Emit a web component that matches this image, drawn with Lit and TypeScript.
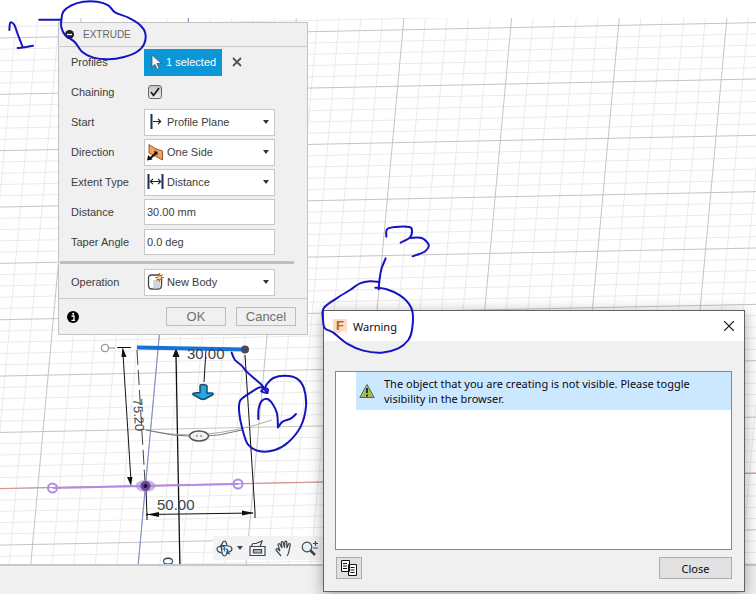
import { LitElement, html, css, svg } from "lit";
import { customElement } from "lit/decorators.js";

type Point = [number, number];

/** Turns a list of pen positions into a smooth stroke. */
function stroke(points: Point[]): string {
  const at = (i: number) => points[Math.max(0, Math.min(points.length - 1, i))];
  let d = `M${points[0].join(" ")}`;
  for (let i = 0; i < points.length - 1; i++) {
    const [a, b, c, e] = [at(i - 1), at(i), at(i + 1), at(i + 2)];
    d += `C${b[0] + (c[0] - a[0]) / 6} ${b[1] + (c[1] - a[1]) / 6} ${c[0] - (e[0] - b[0]) / 6} ${c[1] - (e[1] - b[1]) / 6} ${c[0]} ${c[1]}`;
  }
  return d;
}

/** The 3D canvas: ground grid, axes, sketch geometry and dimensions. */
@customElement("sketch-canvas")
export class SketchCanvas extends LitElement {
  static styles = css`
    :host { display: block; overflow: hidden; background: #fff; }
    .scene { display: block; width: 100%; height: 100%; }
    .minor { stroke: #ebebeb; }
    .major { stroke: #c4c4c4; }
    .dim { font: 15px "Liberation Sans", Arial, sans-serif; fill: #444; }
    .dim.small { font-size: 13px; }
  `;

  private grid(major: boolean) {
    const lines = [];
    for (let i = -5; i < 130; i++) {
      if ((i % 5 === 0) !== major) continue;
      const x = 81 + i * 21.53;
      const y = 38 + i * 11.27;
      lines.push(svg`<path d="M${x} 18l-184 2000M0 ${y}l3000 -61"/>`);
    }
    return lines;
  }

  render() {
    return html`
      <svg class="scene" role="img" aria-label="Sketch canvas">
        <defs><clipPath id="ground"><rect y="18" width="3000" height="2000" /></clipPath></defs>
        <g clip-path="url(#ground)" fill="none">
          <g class="minor">${this.grid(false)}</g>
          <g class="major">${this.grid(true)}</g>
          <path d="M0 488.5L3000 427" stroke="#d98c8c" />
          <path d="M188.5 18L138 566" stroke="#7d8ccb" />
        </g>
        <g fill="none" stroke="#111">
          <path d="M123 354L131 481" />
          <path d="M176 355L180 570" stroke-width="1.3" />
          <path d="M206 350L204 382" />
          <path d="M245 355L255 512M253 513L147 514.500M146 488L147 516M255 512v6M147 513v7" />
          <path d="M137 350L145 482" stroke="#444" stroke-dasharray="15 5" />
          <path d="M117 347.5h14" />
          <path d="M109 348h6" stroke="#888" />
          <circle cx="105" cy="348" r="3.6" fill="#fff" stroke="#999" stroke-width="1.4" />
        </g>
        <g fill="#111">
          <path d="M122.500 347l4 10h-5zM131 486l-4-9h5.500zM176 348l3.500 9h-7zM147 514.500l12-2.500v5zM254 513l-12-2.500v5z" />
        </g>
        <path d="M142 429Q200 444 272 420" fill="none" stroke="#aaa" />
        <path d="M146 430Q198 443 242 430" fill="none" stroke="#777" />
        <ellipse cx="199" cy="436" rx="9.500" ry="5" fill="#f2f2f2" stroke="#555" stroke-width="1.6" />
        <path d="M195.500 436l2-1.300v2.600zM202.500 436l-2-1.300v2.600z" fill="#777" />
        <path d="M137 347.500L245 349.500" stroke="#1672d8" stroke-width="4" />
        <circle cx="245" cy="349.500" r="4" fill="#444c55" />
        <path d="M200 386q0-1.500 3-1.500t4 1.500v7h4.500q2 0 1.500 1.500l-8 4.500q-2 .8-4 0l-8-4.500q-.5-1.500 1.500-1.500l5.500-.5z" fill="#22a7e0" stroke="#174b66" stroke-width="1.500" stroke-linejoin="round" />
        <text class="dim" x="187" y="359">30.00</text>
        <text class="dim" x="157" y="510">50.00</text>
        <text class="dim small" transform="translate(133 399) rotate(86)">75.20</text>
        <text class="dim" transform="translate(163 557) rotate(90)">0</text>
        <path d="M53 488L238 484" stroke="#b18be8" stroke-width="2" />
        <ellipse cx="145.500" cy="486" rx="10" ry="6" fill="#a98fd0" opacity=".65" />
        <circle cx="145.500" cy="486" r="5" fill="#6a469c" />
        <circle cx="145.500" cy="486" r="2" fill="#1d0b33" />
        <g fill="none" stroke="#b18be8" stroke-width="2"><circle cx="52.500" cy="488" r="4.500" /><circle cx="238" cy="484" r="4.500" /></g>
      </svg>
    `;
  }
}

const ICONS = {
  plane: svg`<path d="M4.500 1v15" stroke="#1d2c55" stroke-width="2"/><path d="M6 8.500h8M11 5.800l2.700 2.700L11 11.200" fill="none" stroke="#222" stroke-width="1.200"/>`,
  side: svg`<path d="M2 1.500L8 5.500 15.500 8v9L9 13.500 2 10z" fill="#f5a064" stroke="#9a5a2a"/><path d="M8 5.500v8" stroke="#c87636"/><path d="M3 15.500L9 10" stroke="#111" stroke-width="2"/><path d="M0 17.500l1.200-5.500 4.300 4.500zM6.500 8.500h4v4z" fill="#111"/>`,
  distance: svg`<path d="M1.500 1v15M15.500 1v15" stroke="#1d2c55" stroke-width="2"/><path d="M3 8.500h11M6 5.800l-2.700 2.700L6 11.200M11 5.800l2.700 2.700L11 11.200" fill="none" stroke="#222" stroke-width="1.200"/>`,
  body: svg`<path d="M1.500 5q0-3 3-3h8l2 3v7q0 4-3 4h-7q-3 0-3-4z" fill="#fff" stroke="#444" stroke-width="1.300"/><path d="M6 7h7v7q-1 1.500-3 1.500H6z" fill="#cfd6e6"/><path d="M12.500 0v9M8 4.500h9M9.500 1.500l6 6M15.500 1.500l-6 6" stroke="#c4651b" stroke-width="1.200"/><circle cx="12.500" cy="4.500" r="1.700" fill="#ffd774"/>`,
};

/** Command panel with the parameters of the extrusion. */
@customElement("extrude-panel")
export class ExtrudePanel extends LitElement {
  static styles = css`
    :host {
      display: block; box-sizing: border-box; border: 1px solid #c3c3c3; background: #f0f0f0;
      font: 11px/14px "Liberation Sans", Arial, sans-serif; color: #3c3c3c;
    }
    * { box-sizing: border-box; }
    .head { display: flex; align-items: center; gap: 9px; height: 24px; padding-left: 6px; border-bottom: 1px solid #cacaca; }
    .title { margin: 0; font-size: 10px; font-weight: 400; color: #666; }
    .plain { display: grid; place-items: center; padding: 0; border: 0; background: none; }
    .row { display: grid; grid-template-columns: 73px 131px; align-items: center; height: 30px; padding-left: 12px; }
    .line { display: flex; align-items: center; gap: 10px; }
    .pick {
      display: flex; align-items: center; gap: 4px; flex: none; width: 78px; height: 27px; padding: 0 0 0 7px;
      border: 0; background: #0a96d7; color: #fff; font: inherit;
    }
    .tick { display: grid; width: 14px; height: 14px; margin-left: 4px; }
    .tick > * { grid-area: 1 / 1; width: 14px; height: 14px; margin: 0; }
    .box { appearance: none; border: 1px solid #666; border-radius: 3px; background: linear-gradient(#c4c4c4, #ececec); }
    .tick svg, .combo svg { pointer-events: none; }
    .combo { display: grid; grid-template-columns: 27px 1fr 18px; align-items: center; }
    .combo > * { grid-row: 1; }
    .glyph { grid-column: 1; z-index: 1; margin-left: 3px; }
    .caret { grid-column: 3; z-index: 1; justify-self: center; }
    .field { width: 100%; height: 26px; padding: 0 2px; border: 1px solid #c8c8c8; border-radius: 0; background: #fff; color: #3c3c3c; font: inherit; }
    .combo .field { grid-column: 1 / 4; appearance: none; height: 27px; padding-left: 22px; }
    .rule { height: 3px; margin: 4px 13px 3px 1px; border: 0; background: #bebebe; }
    .foot { display: flex; align-items: center; gap: 10px; height: 36px; margin-top: 1px; padding: 0 11px 0 8px; border-top: 1px solid #cacaca; }
    .info { margin-right: auto; }
    .action { width: 60px; height: 19px; padding: 0; border: 1px solid #bdbdbd; background: #f0f0f0; color: #707070; font: 13px/16px "Liberation Sans", Arial, sans-serif; }
  `;

  private combo(id: string, label: string, value: string, icon: unknown) {
    return html`
      <div class="row">
        <label for=${id}>${label}</label>
        <div class="combo">
          <select class="field" id=${id}><option>${value}</option></select>
          <svg class="glyph" width="18" height="18">${icon}</svg>
          <svg class="caret" width="6" height="4"><path d="M0 0h6L3 4z" fill="#333" /></svg>
        </div>
      </div>
    `;
  }

  private input(id: string, label: string, value: string) {
    return html`
      <div class="row">
        <label for=${id}>${label}</label>
        <input class="field" id=${id} .value=${value} />
      </div>
    `;
  }

  render() {
    return html`
      <header class="head">
        <button class="plain" aria-label="Collapse">
          <svg width="9" height="9"><circle cx="4.500" cy="4.500" r="4.500" fill="#222" /><path d="M2 4.500h5" stroke="#fff" stroke-width="1.300" /></svg>
        </button>
        <h2 class="title">EXTRUDE</h2>
      </header>
      <div class="row">
        <label for="profiles">Profiles</label>
        <div class="line">
          <button class="pick" id="profiles">
            <svg width="11" height="15"><path d="M1 0v12l3-2.500 2.200 5 2-1L6 8.500h4.500z" fill="#f4f4f4" stroke="#445" stroke-width=".7" /></svg>
            <span>1 selected</span>
          </button>
          <button class="plain" aria-label="Clear selection">
            <svg width="10" height="10"><path d="M1 1l8 8M9 1l-8 8" stroke="#555" stroke-width="1.800" /></svg>
          </button>
        </div>
      </div>
      <div class="row">
        <label for="chaining">Chaining</label>
        <span class="tick">
          <input class="box" id="chaining" type="checkbox" checked />
          <svg><path d="M3 7l2.500 3.500L11 3" fill="none" stroke="#111" stroke-width="1.600" /></svg>
        </span>
      </div>
      ${this.combo("start", "Start", "Profile Plane", ICONS.plane)}
      ${this.combo("direction", "Direction", "One Side", ICONS.side)}
      ${this.combo("extent", "Extent Type", "Distance", ICONS.distance)}
      ${this.input("distance", "Distance", "30.00 mm")}
      ${this.input("taper", "Taper Angle", "0.0 deg")}
      <hr class="rule" />
      ${this.combo("operation", "Operation", "New Body", ICONS.body)}
      <footer class="foot">
        <button class="plain info" aria-label="Information">
          <svg width="12" height="12"><circle cx="6" cy="6" r="6" fill="#000" /><path d="M4.500 5h2.500v4M4.500 9.300h3.500" fill="none" stroke="#fff" stroke-width="1.300" /><circle cx="6.200" cy="2.800" r="1" fill="#fff" /></svg>
        </button>
        <button class="action">OK</button>
        <button class="action">Cancel</button>
      </footer>
    `;
  }
}

/** Message window listing the warnings of the current command. */
@customElement("warning-dialog")
export class WarningDialog extends LitElement {
  static styles = css`
    :host {
      display: flex; flex-direction: column; box-sizing: border-box; border: 1px solid #636363; background: #f0f0f0;
      box-shadow: 0 3px 14px rgba(0, 0, 0, 0.35); font: 11px/15px "Noto Sans", "Open Sans", sans-serif; color: #0a0a14;
    }
    * { box-sizing: border-box; }
    .bar { display: flex; align-items: center; gap: 5px; height: 30px; padding: 0 10px 0 8px; background: #fff; }
    .title { flex: 1; margin: 0; font-size: 11px; font-weight: 400; }
    .mark { font: bold 13px "Liberation Sans", Arial, sans-serif; fill: #b5642a; }
    .shut { display: grid; padding: 0; border: 0; background: none; }
    .list { height: 179px; margin: 30px 12px 0 11px; padding: 0 0 0 20px; border: 1px solid #828790; background: #fff; list-style: none; }
    .item { display: flex; align-items: center; gap: 9px; height: 38px; padding-left: 3px; background: #cce8ff; }
    .item svg { flex: none; }
    .foot { display: flex; justify-content: space-between; align-items: flex-start; padding: 7px 12px 12px; }
    .button { display: grid; place-items: center; height: 22px; padding: 0; border: 1px solid #adadad; background: #e1e1e1; color: inherit; font: inherit; }
    .copy { width: 26px; }
    .close { width: 73px; }
  `;

  render() {
    return html`
      <header class="bar">
        <svg width="16" height="16" aria-hidden="true">
          <rect x="1" y="1" width="14" height="14" fill="#fbdcc0" />
          <text class="mark" x="4" y="12">F</text>
          <path d="M9 14h5" stroke="#fff" stroke-width="1.500" />
        </svg>
        <h2 class="title">Warning</h2>
        <button class="shut" aria-label="Close window">
          <svg width="10" height="10"><path d="M0 0l10 10M10 0L0 10" stroke="#111" stroke-width="1.200" /></svg>
        </button>
      </header>
      <ul class="list">
        <li class="item">
          <svg width="16" height="16"><path d="M8 1.500L15.200 14.500H.8z" fill="#c3c545" stroke="#41676a" stroke-linejoin="round" /><path d="M8 3.500L13.700 14H2.300z" fill="#8fae55" opacity=".5" /><path d="M8 5v5M8 11.500v2" stroke="#17383e" stroke-width="2" /></svg>
          <span>The object that you are creating is not visible. Please toggle<br />visibility in the browser.</span>
        </li>
      </ul>
      <footer class="foot">
        <button class="button copy" aria-label="Copy">
          <svg width="16" height="16"><g fill="#fff" stroke="#111"><path d="M.5.500h8v11h-8zM7.500 4.500h8v11h-8z" /><path d="M2 3.500h4M2 6h4M2 8.500h4M9.500 7.500h4M9.500 10h4M9.500 12.500h4" /></g></svg>
        </button>
        <button class="button close">Close</button>
      </footer>
    `;
  }
}

/** View navigation controls along the lower edge of the canvas. */
@customElement("nav-tools")
export class NavTools extends LitElement {
  static styles = css`
    :host { display: flex; align-items: center; gap: 9px; box-sizing: border-box; height: 24px; padding: 0 3px; background: #f3f3f3; }
    .tool { display: flex; align-items: center; gap: 4px; padding: 0; border: 0; background: none; }
    .menu { width: 24px; }
    .menu svg { flex: none; }
    svg { fill: none; stroke: #3d4750; stroke-width: 1.200; }
    .solid { fill: #3d4750; stroke: none; }
  `;

  render() {
    return html`
      <button class="tool menu" aria-label="Orbit">
        <svg width="17" height="17"><path d="M6 13q-5-1-5-4t7-3.500q8 0 8 3.500 0 2-4 3.500M12 10l-1 3 3 1" /><path d="M6 4q1-3 2.500-3T11 5M11.500 9q-.5 7-3 7T5.500 9V6M4 7.500l1.500-3L8 7" /><path d="M8.500 6.500v5M6 9h5" stroke="#2678b8" /></svg>
        <svg width="6" height="4"><path class="solid" d="M0 0h6L3 4z" /></svg>
      </button>
      <button class="tool" aria-label="Look at">
        <svg width="17" height="17"><path d="M1 6.500h15v9H1zM2 6.500L4 3.500h3L13 1l-1 3-1 2.500" /><path d="M4.500 9.500h8v3.500h-8z" fill="#aeb5ba" /></svg>
      </button>
      <button class="tool" aria-label="Pan">
        <svg width="17" height="17"><path d="M6 16L1 10q0-2 2-1l2 2L3 5q0-2 1.800-1L7 8 6.300 2.500q.7-2 2 0L9.500 7.500l.3-5.500q1-1.800 2 0v6l1.700-4q1.500-1.200 1.800.5L14 11q-.5 3-2 5" /></svg>
      </button>
      <button class="tool" aria-label="Zoom">
        <svg width="18" height="17"><circle cx="6" cy="7" r="4.800" fill="#e6f1f7" /><path d="M9.500 10.500L14 15" stroke-width="2.500" /><path d="M12 3.500h5M14.500 1v5M12 8h5" stroke-width="1.100" /></svg>
      </button>
    `;
  }
}

/** Freehand pen marks laid over the workspace. */
const MARKS: { origin: Point; strokes: Point[][] }[] = [
  {
    origin: [0, 0],
    strokes: [
      [[28, 90], [31, 68], [43, 75], [54, 105], [68, 141]],
      [[53, 144], [75, 142], [99, 137]],
      [[118, 59], [183, 59]],
      [[184, 60], [190, 35], [214, 16], [250, 5], [292, 5], [325, 16], [345, 37], [385, 53], [420, 75], [436, 100], [432, 133], [410, 156], [372, 171], [325, 178], [280, 173], [246, 155], [224, 126], [195, 105], [184, 82], [184, 60]],
    ],
  },
  {
    origin: [40, 330],
    strokes: [
      [[575, 68], [585, 90], [605, 107], [620, 125], [645, 147], [665, 165], [682, 189]],
      [[682, 189], [684, 178], [672, 177], [664, 184], [682, 189]],
      [[674, 178], [680, 163], [700, 144], [735, 137], [770, 145], [792, 175], [798, 230], [782, 290], [745, 337], [705, 360], [660, 364], [625, 345], [608, 300], [598, 250], [600, 213], [628, 190], [660, 172], [676, 178]],
      [[655, 267], [656, 235], [665, 213], [682, 207], [698, 222], [711, 250], [714, 292]],
      [[714, 292], [728, 275], [752, 266], [768, 252]],
    ],
  },
  {
    origin: [320, 220],
    strokes: [
      [[199, 50], [201, 28], [225, 21], [268, 21], [276, 32], [270, 52], [242, 68]],
      [[270, 54], [305, 54], [326, 74], [318, 92], [298, 102], [278, 109]],
      [[197, 115], [185, 145], [179, 175], [176, 208]],
      [[166, 203], [200, 208], [240, 226], [266, 250], [278, 278], [276, 330], [265, 360], [235, 385], [185, 398], [130, 392], [80, 370], [40, 338], [15, 325], [9, 300], [11, 265], [50, 235], [90, 210], [120, 190], [150, 184], [177, 186]],
    ],
  },
];

@customElement("app-root")
export class AppRoot extends LitElement {
  static styles = css`
    :host { position: relative; display: grid; grid-template-rows: 1fr 30px; min-height: 100vh; overflow: hidden; }
    .canvas { min-height: 0; }
    .status { border-top: 2px solid #c9c9c9; background: #f0f0f0; }
    .extrude { position: absolute; left: 58px; top: 22px; width: 250px; }
    .tools { position: absolute; left: 213px; bottom: 34px; }
    .warning { position: absolute; right: 11px; bottom: 2px; width: 422px; }
    .ink { position: absolute; inset: 0; width: 100%; height: 100%; pointer-events: none; fill: none; stroke: #1414c0; stroke-width: 6; stroke-linecap: round; stroke-linejoin: round; }
  `;

  render() {
    return html`
      <sketch-canvas class="canvas"></sketch-canvas>
      <footer class="status"></footer>
      <nav-tools class="tools"></nav-tools>
      <extrude-panel class="extrude"></extrude-panel>
      <warning-dialog class="warning"></warning-dialog>
      <svg class="ink" aria-hidden="true">
        ${MARKS.map(
          (mark) => svg`<g transform="translate(${mark.origin.join(" ")}) scale(0.3333)">
            ${mark.strokes.map((points) => svg`<path d=${stroke(points)} />`)}
          </g>`
        )}
      </svg>
    `;
  }
}
